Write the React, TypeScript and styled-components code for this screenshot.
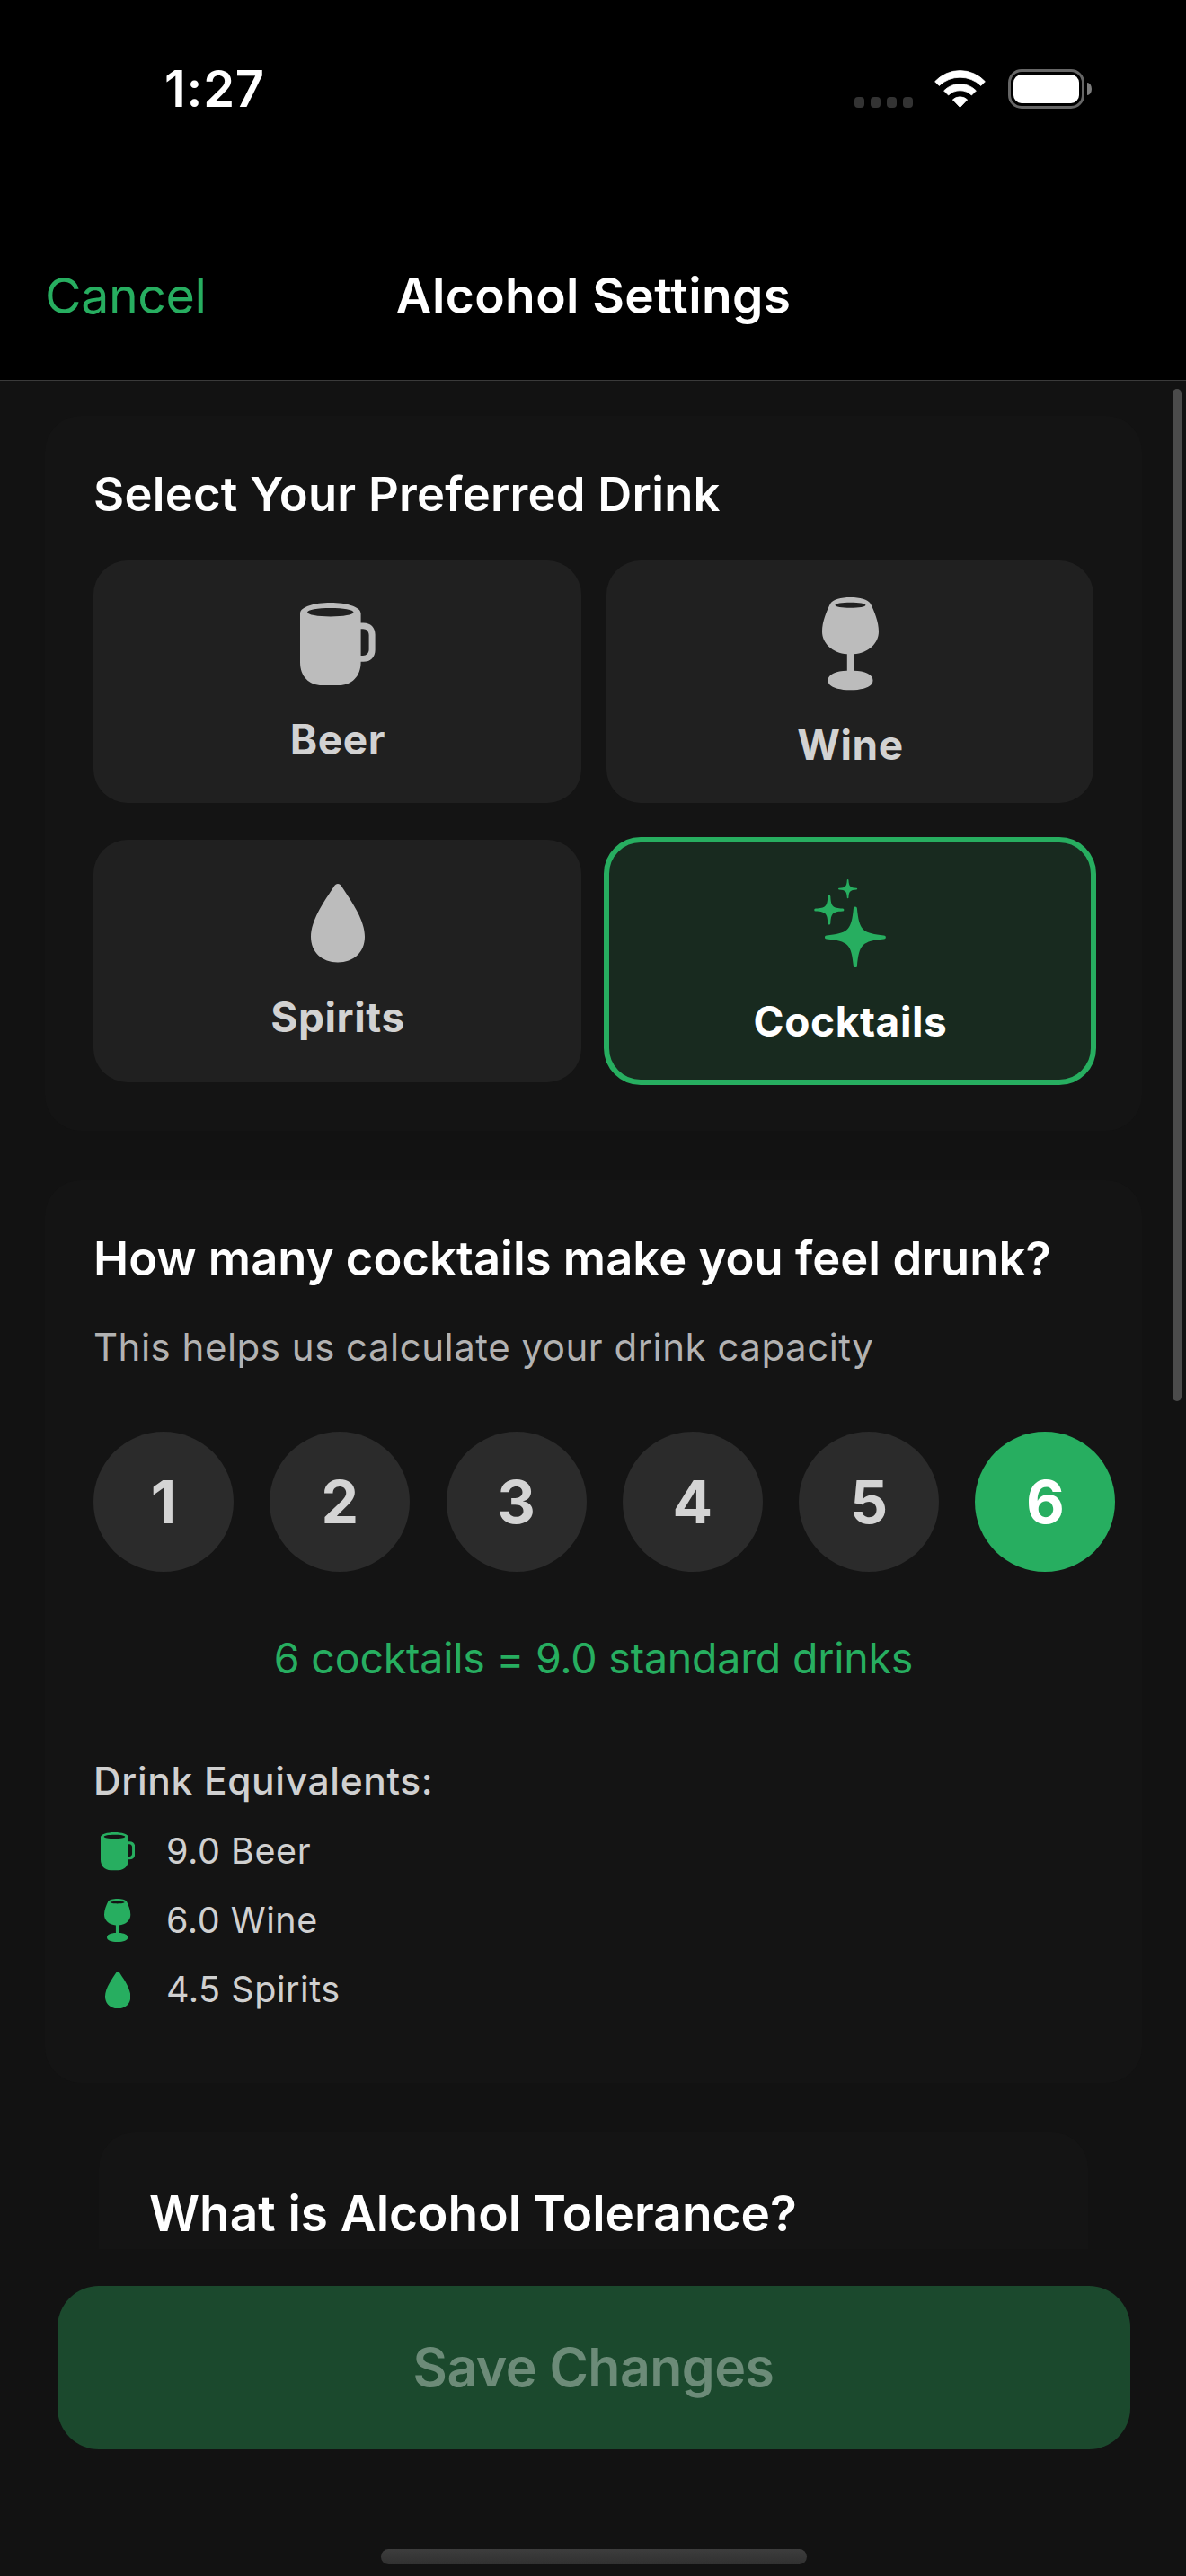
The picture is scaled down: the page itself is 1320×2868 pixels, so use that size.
import React, { useState } from "react";
import styled, { createGlobalStyle } from "styled-components";

const GREEN = "#27ae60";

const GlobalStyle = createGlobalStyle`
  *, *::before, *::after { box-sizing: border-box; }
  body { margin: 0; background: #121212; }
  button { font: inherit; border: 0; padding: 0; background: none; cursor: pointer; }
`;

const Screen = styled.div`
  position: relative;
  display: flex;
  flex-direction: column;
  width: 1320px;
  height: 2868px;
  overflow: hidden;
  background: #121212;
  color: #fff;
  font-family: Inter, "Liberation Sans", sans-serif;
`;

const StatusBar = styled.div`
  display: flex;
  align-items: center;
  justify-content: space-between;
  flex: none;
  height: 198px;
  padding: 0 105px 0 183px;
  background: #000;
`;

const Clock = styled.span`
  font-size: 56px;
  font-weight: 600;
  letter-spacing: 0.8px;
  line-height: 64px;
`;

const StatusIcons = styled.div`
  display: flex;
  align-items: center;
`;

const SignalDots = styled.div`
  display: flex;
  gap: 7px;
  margin: 30px 24px 0 0;
`;

const SignalDot = styled.span`
  width: 11px;
  height: 12px;
  border-radius: 4px;
  background: #333;
`;

const Battery = styled.div`
  display: flex;
  align-items: center;
  gap: 3px;
  margin-left: 25px;
`;

const BatteryShell = styled.div`
  width: 85px;
  height: 44px;
  padding: 3px;
  border: 3.5px solid #666;
  border-radius: 15px;
`;

const BatteryLevel = styled.div`
  height: 100%;
  border-radius: 9px;
  background: #fff;
`;

const BatteryTip = styled.div`
  width: 5px;
  height: 14px;
  border-radius: 0 5px 5px 0 / 0 7px 7px 0;
  background: #7d7d7d;
`;

const NavBar = styled.header`
  display: grid;
  grid-template-columns: 1fr auto 1fr;
  align-items: center;
  flex: none;
  height: 226px;
  padding: 37px 49px 0 50px;
  background: #000;
  border-bottom: 1px solid #3a3a3a;
`;

const CancelButton = styled.button`
  justify-self: start;
  color: ${GREEN};
  font-size: 55.5px;
  letter-spacing: -0.4px;
  line-height: 66px;
`;

const NavTitle = styled.h1`
  margin: 0;
  font-size: 55px;
  font-weight: 600;
  letter-spacing: 0.4px;
  line-height: 66px;
`;

const Content = styled.main`
  display: flex;
  flex-direction: column;
  gap: 55px;
  flex: none;
  height: 2080px;
  padding: 39px 49px 0 50px;
  overflow: hidden;
`;

const Card = styled.section`
  flex: none;
  padding: 55px 54px 54px;
  border-radius: 40px;
  background: #141414;
`;

const CapacityCard = styled(Card)`
  padding-bottom: 66px;
`;

const InfoCard = styled(Card)`
  margin: 0 60px;
  padding: 57px 56px 200px;
`;

const CardTitle = styled.h2<{ $tracking?: number }>`
  margin: 0;
  font-size: 52.5px;
  font-weight: 600;
  letter-spacing: ${(p) => p.$tracking ?? 0.05}px;
  line-height: 64px;
  white-space: nowrap;
`;

const InfoTitle = styled(CardTitle)`
  font-size: 55px;
  line-height: 66px;
`;

const DrinkGrid = styled.div`
  display: grid;
  grid-template-columns: 543px 542px;
  grid-auto-rows: 270px;
  gap: 41px 28px;
  margin-top: 42px;
`;

const DrinkTile = styled.button<{ $selected: boolean }>`
  display: flex;
  flex-direction: column;
  align-items: center;
  justify-content: center;
  gap: 32px;
  padding-top: 4px;
  border-radius: 38px;
  background: ${(p) => (p.$selected ? "#182a1f" : "#202020")};
  outline: ${(p) => (p.$selected ? `6px solid ${GREEN}` : "none")};
  outline-offset: -3px;
  color: ${(p) => (p.$selected ? GREEN : "#bcbcbc")};
`;

const DrinkLabel = styled.span<{ $selected: boolean }>`
  padding-left: 1px;
  color: ${(p) => (p.$selected ? "#fff" : "#d2d2d2")};
  font-size: 46px;
  font-weight: 700;
  letter-spacing: 0.6px;
  line-height: 56px;
`;

const Subtitle = styled.p`
  margin: 41px 0 0;
  color: #b2b2b2;
  font-size: 42px;
  letter-spacing: 0.5px;
  line-height: 52px;
`;

const CountRow = styled.div`
  display: flex;
  gap: 40.3px;
  margin-top: 68px;
`;

const CountButton = styled.button<{ $selected: boolean }>`
  flex: none;
  width: 156px;
  height: 156px;
  border-radius: 50%;
  background: ${(p) => (p.$selected ? GREEN : "#2b2b2b")};
  color: ${(p) => (p.$selected ? "#fff" : "#d4d4d4")};
  font-size: 66px;
  font-weight: 700;
  line-height: 156px;
`;

const Summary = styled.p`
  margin: 68px 0 0;
  color: ${GREEN};
  font-size: 46.5px;
  letter-spacing: -0.21px;
  line-height: 56px;
  text-align: center;
`;

const EquivalentsTitle = styled.h3`
  margin: 83px 0 13px;
  color: #d0d0d0;
  font-size: 42.5px;
  font-weight: 500;
  letter-spacing: 0.65px;
  line-height: 52px;
`;

const EquivalentRow = styled.div`
  display: flex;
  align-items: center;
  gap: 27px;
  height: 77px;
  color: #d0d0d0;
  font-size: 39.5px;
  letter-spacing: 0.55px;
  line-height: 48px;
`;

const EquivalentIcon = styled.span`
  display: flex;
  justify-content: center;
  width: 54px;
  padding-top: 2px;
  color: ${GREEN};
`;

const Footer = styled.footer`
  display: flex;
  flex-direction: column;
  align-items: center;
  flex: none;
  height: 364px;
  padding: 41px 0 0 1px;
`;

const SaveButton = styled.button`
  width: 1194px;
  height: 182px;
  border-radius: 46px;
  background: #1b492d;
  color: #6c8b78;
  font-size: 59px;
  font-weight: 600;
  letter-spacing: -0.54px;
  line-height: 180px;
`;

const HomeIndicator = styled.div`
  width: 474px;
  height: 17px;
  margin-top: 111px;
  border-radius: 9px;
  background: linear-gradient(#3d3d3d, #313131);
`;

const ScrollThumb = styled.div`
  position: absolute;
  top: 433px;
  right: 5px;
  width: 10px;
  height: 1127px;
  border-radius: 5px;
  background: #4b4b4b;
`;

type IconProps = { scale?: number };

const MugIcon = ({ scale = 1 }: IconProps) => (
  <svg width={84 * scale} height={92 * scale} viewBox="0 0 84 92" fill="currentColor" fillRule="evenodd">
    <path d="M0 12C0 4.5 16 0 33.8 0S67.6 4.5 67.6 12V22.5H70.5C78.5 22.5 83.6 27.8 83.6 35.5V52.7C83.6 60.5 78.5 65.8 70.5 65.8H67.6V66.5C67.6 82 57.5 92 43 92H24.6C10 92 0 82 0 66.5ZM67.6 29.2V58.9H70C74 58.9 76.6 56.2 76.6 52V36.2C76.6 32 74 29.2 70 29.2ZM8.1 10.7C8.1 13.4 19.6 15.4 33.8 15.4S59.5 13.4 59.5 10.7 48 6 33.8 6 8.1 8 8.1 10.7Z" />
  </svg>
);

const WineIcon = ({ scale = 1 }: IconProps) => (
  <svg width={63 * scale} height={103.5 * scale} viewBox="0 0 63 103.5" fill="currentColor" fillRule="evenodd">
    <path d="M31.5 0C42 0 51 2.2 54 7.2C58 15.5 63 27 63 38C63 51.5 51.5 62 35.2 63.3V81.8C47.5 82 56.5 86 56.5 92.4C56.5 99.3 46.5 103.3 31.5 103.3S6.5 99.3 6.5 92.4C6.5 86 15.5 82 27.8 81.8V63.3C11.5 62 0 51.5 0 38C0 27 5 15.5 9 7.2C12 2.2 21 0 31.5 0ZM14.5 8.7C14.5 10.4 22 11.7 31.5 11.7S48.5 10.4 48.5 8.7 41 5.7 31.5 5.7 14.5 7 14.5 8.7Z" />
  </svg>
);

const DropIcon = ({ scale = 1 }: IconProps) => (
  <svg width={60 * scale} height={87.5 * scale} viewBox="0 0 60 87.5" fill="currentColor">
    <path d="M30 0C31.8 0 33 .9 34 2.5C41 14 60 38 60 59C60 76 47.5 87.5 30 87.5S0 76 0 59C0 38 19 14 26 2.5C27 .9 28.2 0 30 0Z" />
  </svg>
);

/* Four-pointed star centred on (0, 0): r is the reach of its points, t their half width. */
const starPath = (r: number, t: number) => {
  const e = r - t;
  const a = r * 0.124;
  const b = r * 0.235;
  return (
    `M${-t} ${-e}A${t} ${t} 0 0 1 ${t} ${-e}C${a} ${-b} ${b} ${-a} ${e} ${-t}` +
    `A${t} ${t} 0 0 1 ${e} ${t}C${b} ${a} ${a} ${b} ${t} ${e}` +
    `A${t} ${t} 0 0 1 ${-t} ${e}C${-a} ${b} ${-b} ${a} ${-e} ${t}` +
    `A${t} ${t} 0 0 1 ${-e} ${-t}C${-b} ${-a} ${-a} ${-b} ${-t} ${-e}Z`
  );
};

const SparklesIcon = ({ scale = 1 }: IconProps) => (
  <svg width={80 * scale} height={98.5 * scale} viewBox="0 0 80 98.5" fill="currentColor">
    <path transform="translate(45.9 64.4)" d={starPath(34, 2)} />
    <path transform="translate(16.8 34)" d={starPath(16.6, 1.5)} />
    <path transform="translate(37.6 10.6)" d={starPath(10.6, 0.8)} />
  </svg>
);

const WifiIcon = () => (
  <svg width="57" height="43" viewBox="0 0 57 43" fill="#fff" stroke="#fff" strokeWidth="0.8" strokeLinejoin="round">
    <path d="M.6 12.8A38 38 0 0 1 56.4 12.8L51.8 17.4A34 34 0 0 0 5.2 17.4Z" />
    <path d="M10.6 23A25 25 0 0 1 46.4 23L41.4 28A18.5 18.5 0 0 0 15.6 28Z" />
    <path d="M20.4 33A12 12 0 0 1 36.6 33L28.5 41.6Z" />
  </svg>
);

const drinks = [
  { name: "Beer", Icon: MugIcon },
  { name: "Wine", Icon: WineIcon },
  { name: "Spirits", Icon: DropIcon },
  { name: "Cocktails", Icon: SparklesIcon },
];

const equivalents = [
  { text: "9.0 Beer", Icon: MugIcon, scale: 0.458 },
  { text: "6.0 Wine", Icon: WineIcon, scale: 0.465 },
  { text: "4.5 Spirits", Icon: DropIcon, scale: 0.472 },
];

export default function App() {
  const [drink, setDrink] = useState("Cocktails");
  const [count, setCount] = useState(6);

  return (
    <Screen>
      <GlobalStyle />
      <StatusBar>
        <Clock>1:27</Clock>
        <StatusIcons>
          <SignalDots>
            {[0, 1, 2, 3].map((i) => (
              <SignalDot key={i} />
            ))}
          </SignalDots>
          <WifiIcon />
          <Battery>
            <BatteryShell>
              <BatteryLevel />
            </BatteryShell>
            <BatteryTip />
          </Battery>
        </StatusIcons>
      </StatusBar>

      <NavBar>
        <CancelButton>Cancel</CancelButton>
        <NavTitle>Alcohol Settings</NavTitle>
      </NavBar>

      <Content>
        <Card>
          <CardTitle $tracking={0.26}>Select Your Preferred Drink</CardTitle>
          <DrinkGrid>
            {drinks.map(({ name, Icon }) => (
              <DrinkTile key={name} $selected={name === drink} onClick={() => setDrink(name)}>
                <Icon />
                <DrinkLabel $selected={name === drink}>{name}</DrinkLabel>
              </DrinkTile>
            ))}
          </DrinkGrid>
        </Card>

        <CapacityCard>
          <CardTitle>How many cocktails make you feel drunk?</CardTitle>
          <Subtitle>This helps us calculate your drink capacity</Subtitle>
          <CountRow>
            {[1, 2, 3, 4, 5, 6].map((n) => (
              <CountButton key={n} $selected={n === count} onClick={() => setCount(n)}>
                {n}
              </CountButton>
            ))}
          </CountRow>
          <Summary>
            {count} cocktails = {(count * 1.5).toFixed(1)} standard drinks
          </Summary>
          <EquivalentsTitle>Drink Equivalents:</EquivalentsTitle>
          {equivalents.map(({ text, Icon, scale }) => (
            <EquivalentRow key={text}>
              <EquivalentIcon>
                <Icon scale={scale} />
              </EquivalentIcon>
              {text}
            </EquivalentRow>
          ))}
        </CapacityCard>

        <InfoCard>
          <InfoTitle $tracking={-0.04}>What is Alcohol Tolerance?</InfoTitle>
        </InfoCard>
      </Content>

      <Footer>
        <SaveButton>Save Changes</SaveButton>
        <HomeIndicator />
      </Footer>
      <ScrollThumb />
    </Screen>
  );
}
